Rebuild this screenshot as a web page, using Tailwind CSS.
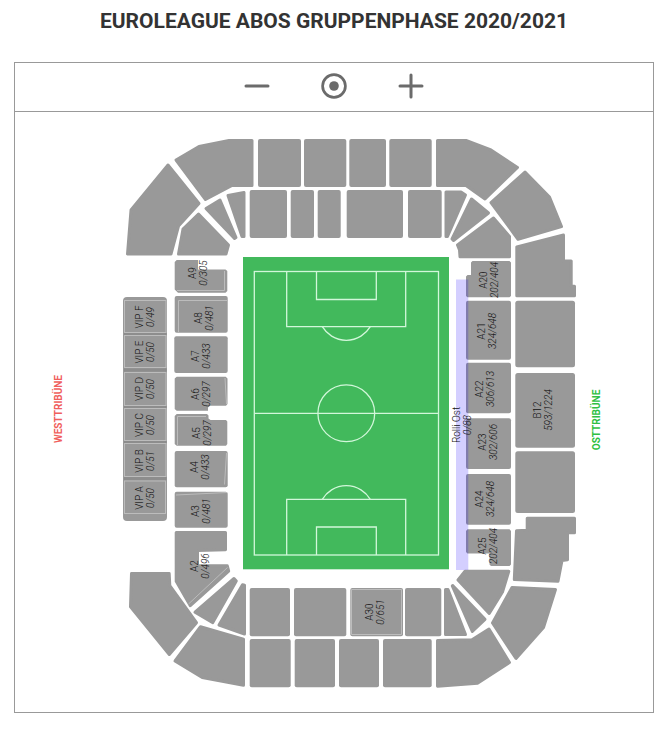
<!DOCTYPE html>
<html lang="de">
<head>
<meta charset="utf-8">
<meta name="viewport" content="width=device-width, initial-scale=1">
<title>Euroleague Abos Gruppenphase 2020/2021</title>
<script src="https://cdn.jsdelivr.net/npm/@tailwindcss/browser@4"></script>
</head>
<body class="bg-white font-['Roboto',sans-serif] text-[#333]">
<main class="flex flex-col pt-2 pb-6 pl-[14px] pr-[15px]">
  <h1 class="mb-[28px] text-center text-[21px] leading-[26px] font-bold">EUROLEAGUE ABOS GRUPPENPHASE 2020/2021</h1>
  <section class="border border-[#999]" aria-label="Saalplan">
    <div class="flex h-[49px] items-center justify-center gap-[37px] border-b border-[#999] pb-[2px] text-[#6b6b6b]">
      <button type="button" aria-label="Verkleinern" class="flex h-10 w-10 items-center justify-center">
        <svg class="h-7 w-7" viewBox="0 0 28 28" fill="none" stroke="currentColor" stroke-width="3" stroke-linecap="round"><path d="M3 14H25"/></svg>
      </button>
      <button type="button" aria-label="Zentrieren" class="flex h-10 w-10 items-center justify-center">
        <svg class="h-7 w-7" viewBox="0 0 28 28"><circle cx="14" cy="14" r="11.4" fill="none" stroke="currentColor" stroke-width="2.7"/><circle cx="14" cy="14" r="4.8" fill="currentColor"/></svg>
      </button>
      <button type="button" aria-label="Vergrößern" class="flex h-10 w-10 items-center justify-center">
        <svg class="h-7 w-7" viewBox="0 0 28 28" fill="none" stroke="currentColor" stroke-width="3" stroke-linecap="round"><path d="M3 14H25M14 3V25"/></svg>
      </button>
    </div>
    <svg class="block h-auto w-full" viewBox="15 112 638 600" role="img" aria-label="Stadionplan">
      <!-- corner blocks and outer stands -->
      <g fill="#999" stroke="#999" stroke-width="3" stroke-linejoin="round">
        <path d="M168 165L131 210L127.5 254H171L178.5 226L199 203.5Z"/>
        <path d="M176 160L199 146.5L229 140.5H252V185.5H232L205.5 199.5Z"/>
        <path d="M198.5 214L183 229L178.5 254H226L228.5 245Z"/>
        <path d="M206 208.5L220 200L236 237.500L234.500 238.500Z"/>
        <path d="M228 195.500L244 192.500V236.500H242Z"/>
        <path d="M437.500 140.500H466L491 150L517.500 167.500L485 199L466 185.500H437.500Z"/>
        <path d="M525 172L549.500 197L561.500 226.500L518 239.300L512 231L491 202.500Z"/>
        <path d="M516.800 247L563.500 235V261H571.200V286.300H574.500V295.800H516.800Z"/>
        <path d="M446 192H461L465.500 195L447.500 236.500H446Z"/>
        <path d="M471.500 199L488.500 213L453.500 240.500L452 239Z"/>
        <path d="M493.500 218L509.500 236.500V256.800H460L459.500 250L457.500 245Z"/>
        <path d="M527.200 518.200H574.500V532.800H567.500V559.800L562 560.500L558 581.200L514.300 579.500L516.500 530.800L527.200 530.200Z"/>
        <path d="M512 587.500L555.500 589.500L543.500 627.500L516 658.500L492.500 623Z"/>
        <path d="M489 629L509.500 662.500L477.500 683.200L437.500 686.200V640.500L472 639.800Z"/>
        <path d="M465 571.200H508.800L502.500 592L489.200 613.500L458 580Z"/>
        <path d="M452.700 585.500L485 619.300L472.300 631.500L452.300 586Z"/>
        <path d="M445.500 589.500H448L465.500 634.500H445.500Z"/>
        <path d="M131.500 573.500H169.200L169.800 585.500L196.500 622.700L169.300 654.500L130.500 606.800Z"/>
        <path d="M200.500 626.700L243.500 639.200V685.300L202.200 677.500L175 661Z"/>
        <path d="M176.200 532.500H225.500V549.800L197.500 550.500V565.800H227.300L228.700 571.200L190.300 605.700L176.200 581.300Z"/>
        <path d="M234 578.500L236.300 581L212.800 622.600L195 612.200Z"/>
        <path d="M242.500 584.700L244.500 585.300V634L219 625Z"/>
      </g>
      <!-- straight stands -->
      <g fill="#999">
        <rect x="258" y="139" width="43" height="48" rx="2"/><rect x="304" y="139" width="42.300" height="48" rx="2"/><rect x="349.300" y="139" width="36.700" height="48" rx="2"/><rect x="389.300" y="139" width="42.400" height="48" rx="2"/>
        <rect x="249.700" y="190" width="37.300" height="48" rx="2"/><rect x="290.700" y="190" width="23.300" height="48" rx="2"/><rect x="317.700" y="190" width="23" height="48" rx="2"/><rect x="346.700" y="190" width="56.300" height="48" rx="2"/><rect x="408" y="190" width="33.700" height="48" rx="2"/>
        <rect x="515.300" y="300.700" width="59.700" height="66.600" rx="2.500"/><rect x="515.300" y="373" width="59.700" height="74.700" rx="2.500"/><rect x="515.300" y="451.300" width="59.700" height="61.700" rx="2.500"/>
        <rect x="249.700" y="588" width="40.300" height="48.300" rx="2"/><rect x="294" y="588" width="52.300" height="48.300" rx="2"/><rect x="350.300" y="588" width="52.700" height="48.300" rx="2"/><rect x="405" y="588" width="36.300" height="48.300" rx="2"/>
        <rect x="249.700" y="639" width="41" height="48.300" rx="2"/><rect x="294.700" y="639" width="40.300" height="48.300" rx="2"/><rect x="339" y="639" width="40" height="48.300" rx="2"/><rect x="383" y="639" width="48.700" height="48.300" rx="2"/>
        <rect x="123" y="297" width="44" height="224" rx="4"/>
        <path d="M176.700 260H198V269.500H225.500L227.300 271V291L225.500 292.700H178L174.700 289.500V262Z"/>
        <rect x="174.700" y="296" width="53" height="36.700" rx="2"/><rect x="174.300" y="336.300" width="53.400" height="36.700" rx="2"/>
        <path d="M176.700 376.700H225.700L227.500 378.500V404L226 405.700H210L208 407.500V410.700H176.700L174.700 409V378.500Z"/>
        <path d="M176.700 414H207L208.500 415.500V418.500L210.500 420H226L227.300 421.500V444L226 445.700H176.700L174.700 444V416Z"/>
        <rect x="174.700" y="451" width="53" height="36.300" rx="2"/><rect x="174.700" y="491.700" width="53" height="36" rx="2"/>
        <path d="M472.500 261H509.500L511 262.500V296L509.500 297.300H467.500L466 296V276.500L467.500 275H471V262.500Z"/>
        <rect x="466" y="300.700" width="45" height="59" rx="2"/><rect x="466" y="362.700" width="45" height="50.600" rx="2"/><rect x="466" y="418.300" width="45" height="50.700" rx="2"/><rect x="466" y="474" width="45" height="50.700" rx="2"/>
        <path d="M467.500 529.300H509.500L511 531V564.500L509.500 566H491L489.500 564.500V553.500H467.500L466 552V531Z"/>
      </g>
      <!-- block outlines -->
      <g fill="none" stroke="#bcbcbc" stroke-width="1">
        <rect x="124.500" y="300.500" width="41.500" height="32"/><rect x="124.500" y="335.500" width="41.500" height="32"/><rect x="124.500" y="372.500" width="41.500" height="33"/><rect x="124.500" y="408.500" width="41.500" height="32"/><rect x="124.500" y="443.500" width="41.500" height="33"/><rect x="124.500" y="481" width="41" height="32.500"/>
        <path d="M224.500 271V290.500H177M178.500 332V300.500H227M225 378L226.500 404M177.500 445V416.500H206M226.500 453L224.500 484.500M176 495L227 492.500M188.500 604L227.500 567.500"/>
        <path d="M351.500 589.500H401.500V634.500H351.500Z"/>
      </g>
      <g fill="#868686">
        <path d="M124 333H166.500V335H124ZM124 368.500H166.500V371.500H124ZM124 406H166.500V408H124ZM124 441H166.500V443H124ZM124 477H166.500V480H124Z" opacity=".6"/>
      </g>
      <rect x="456" y="279.500" width="12.300" height="290.500" fill="#1a00ff" fill-opacity=".19"/>
      <!-- pitch -->
      <rect x="243" y="257" width="206" height="312.300" fill="#42b95c"/>
      <g fill="none" stroke="#d2f7da" stroke-width="1.300">
        <rect x="254.300" y="271.500" width="184.200" height="283.500"/>
        <path d="M254.300 413.300H438.500M286.700 271.500V326.700H405.700V271.500M316.500 271.500V299.500H376.300V271.500M286.700 555V499.300H405.700V555M316.500 555V527H376.300V555"/>
        <circle cx="346.300" cy="413.300" r="28.400"/>
        <path d="M322.300 326.700A28 28 0 0 0 370.300 326.700M322.300 499.300A28 28 0 0 1 370.300 499.300"/>
      </g>
      <!-- labels -->
      <g class="text-[10px] font-light" fill="#111" text-anchor="middle">
        <text transform="translate(143 317) rotate(-90)">VIP F<tspan class="italic" x="0" dy="11">0/49</tspan></text>
        <text transform="translate(143 352) rotate(-90)">VIP E<tspan class="italic" x="0" dy="11">0/50</tspan></text>
        <text transform="translate(143 389) rotate(-90)">VIP D<tspan class="italic" x="0" dy="11">0/50</tspan></text>
        <text transform="translate(143 425) rotate(-90)">VIP C<tspan class="italic" x="0" dy="11">0/50</tspan></text>
        <text transform="translate(143 461) rotate(-90)">VIP B<tspan class="italic" x="0" dy="11">0/51</tspan></text>
        <text transform="translate(143 498) rotate(-90)">VIP A<tspan class="italic" x="0" dy="11">0/50</tspan></text>
        <text transform="translate(196 273) rotate(-90)">A9<tspan class="italic" x="0" dy="11">0/305</tspan></text>
        <text transform="translate(202 318) rotate(-90)">A8<tspan class="italic" x="0" dy="11">0/481</tspan></text>
        <text transform="translate(199 356) rotate(-90)">A7<tspan class="italic" x="0" dy="11">0/433</tspan></text>
        <text transform="translate(199 394) rotate(-90)">A6<tspan class="italic" x="0" dy="11">0/297</tspan></text>
        <text transform="translate(200 433) rotate(-90)">A5<tspan class="italic" x="0" dy="11">0/297</tspan></text>
        <text transform="translate(198 467) rotate(-90)">A4<tspan class="italic" x="0" dy="11">0/433</tspan></text>
        <text transform="translate(199 511) rotate(-90)">A3<tspan class="italic" x="0" dy="11">0/481</tspan></text>
        <text transform="translate(198 566) rotate(-90)">A2<tspan class="italic" x="0" dy="11">0/496</tspan></text>
        <text transform="translate(487 280) rotate(-90)">A20<tspan class="italic" x="0" dy="11">202/404</tspan></text>
        <text transform="translate(485 331) rotate(-90)">A21<tspan class="italic" x="0" dy="11">324/648</tspan></text>
        <text transform="translate(483 389) rotate(-90)">A22<tspan class="italic" x="0" dy="11">306/613</tspan></text>
        <text transform="translate(486 442) rotate(-90)">A23<tspan class="italic" x="0" dy="11">302/606</tspan></text>
        <text transform="translate(483 499) rotate(-90)">A24<tspan class="italic" x="0" dy="11">324/648</tspan></text>
        <text transform="translate(486 546) rotate(-90)">A25<tspan class="italic" x="0" dy="11">202/404</tspan></text>
        <text transform="translate(541 410) rotate(-90)">B12<tspan class="italic" x="0" dy="11">593/1224</tspan></text>
        <text transform="translate(460 425) rotate(-90)">Rolli Ost<tspan class="italic" x="0" dy="11">0/88</tspan></text>
        <text transform="translate(373 612) rotate(-90)">A30<tspan class="italic" x="0" dy="11">0/651</tspan></text>
      </g>
      <g class="text-[10px] font-bold" text-anchor="middle">
        <text transform="translate(62 409) rotate(-90)" fill="#f0605c">WESTTRIBÜNE</text>
        <text transform="translate(600 420) rotate(-90)" fill="#2fc043">OSTTRIBÜNE</text>
      </g>
    </svg>
  </section>
</main>
</body>
</html>
